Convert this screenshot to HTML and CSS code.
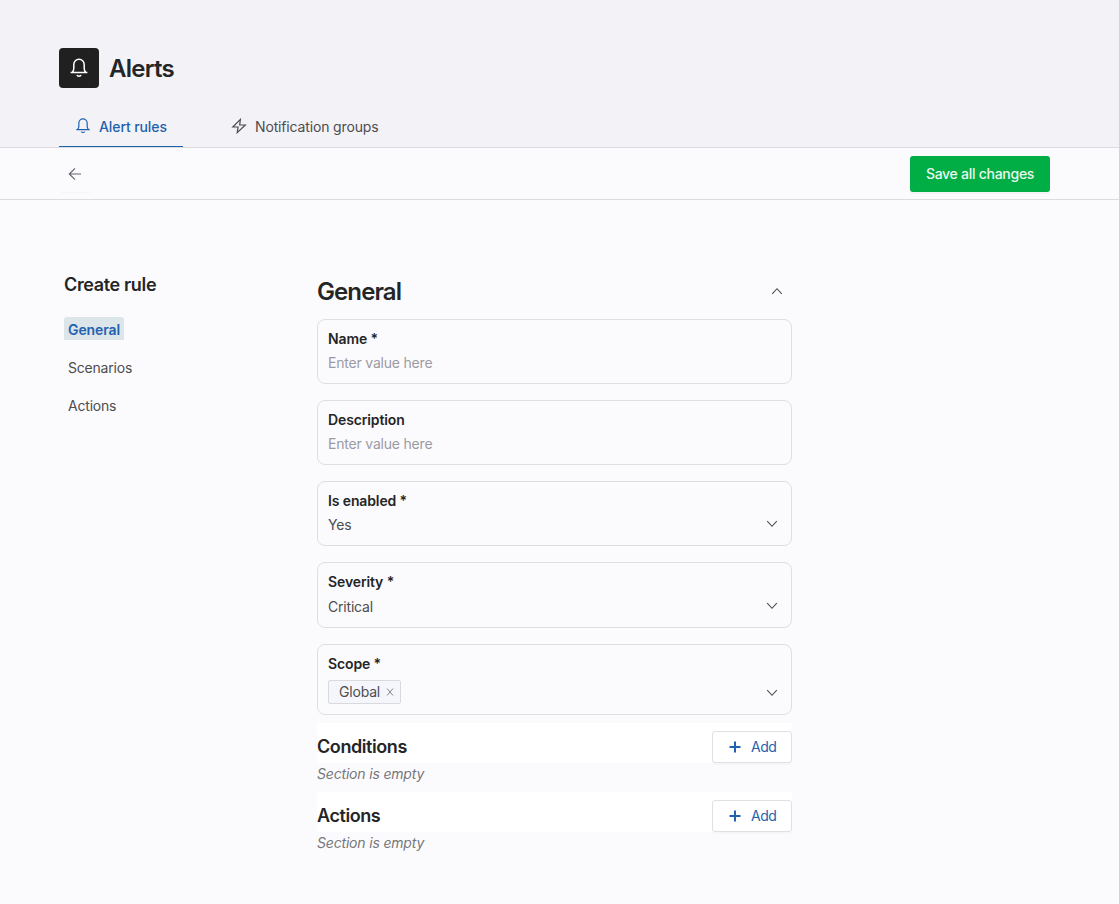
FILE: index.html
```html
<!DOCTYPE html>
<html lang="en">
<head>
<meta charset="utf-8">
<title>Alerts</title>
<link rel="stylesheet" href="styles.css">
</head>
<body>
<svg width="0" height="0" class="sprite" aria-hidden="true">
  <symbol id="bell" viewBox="0 0 20 20"><path d="M1.600 14.500h16.800M3.300 14.300c1.100-1.100 1.500-2.300 1.500-4V6.400a5.200 5.200 0 0 1 10.400 0v3.900c0 1.700.4 2.900 1.500 4M8 17c.4 1.500 3.600 1.500 4 0"/></symbol>
  <symbol id="down" viewBox="0 0 12 8"><path d="M1.200 1.200 6 6.300l4.800-5.100"/></symbol>
  <symbol id="plus" viewBox="0 0 12 12"><path d="M6 .5v11M.5 6h11"/></symbol>
</svg>
<header class="header">
  <div class="brand">
    <span class="logo"><svg class="logo-bell"><use href="#bell"/></svg></span>
    <h1 class="title">Alerts</h1>
  </div>
  <nav class="tabs">
    <a class="tab tab-active"><svg class="tab-icon"><use href="#bell"/></svg>Alert rules</a>
    <a class="tab"><svg class="tab-icon tab-bolt" viewBox="0 0 16 16"><path d="M9.400 1.400 1.800 9h5.300l-.9 5.600L14.300 7H8.700z"/></svg>Notification groups</a>
  </nav>
</header>
<div class="toolbar">
  <button class="back" aria-label="Back"><svg class="back-icon" viewBox="0 0 14 14"><path d="M13 7H1.500M7 1.300 1.300 7 7 12.700"/></svg></button>
  <button class="save">Save all changes</button>
</div>
<main class="main">
  <aside class="side">
    <h2 class="side-title">Create rule</h2>
    <a class="side-link side-active">General</a>
    <a class="side-link">Scenarios</a>
    <a class="side-link">Actions</a>
  </aside>
  <section class="form">
    <div class="form-head"><h2 class="form-title">General</h2><svg class="chevron chevron-up"><use href="#down"/></svg></div>
    <div class="field"><div class="label">Name *</div><div class="value placeholder">Enter value here</div></div>
    <div class="field"><div class="label">Description</div><div class="value placeholder">Enter value here</div></div>
    <div class="field"><div class="label">Is enabled *</div><div class="value">Yes<svg class="chevron"><use href="#down"/></svg></div></div>
    <div class="field field-severity"><div class="label">Severity *</div><div class="value">Critical<svg class="chevron"><use href="#down"/></svg></div></div>
    <div class="field field-scope"><div class="label">Scope *</div><div class="value"><span class="tag">Global<svg class="tag-x" viewBox="0 0 8 8"><path d="m1 .5 6 7m0-7-6 7"/></svg></span><svg class="chevron"><use href="#down"/></svg></div></div>
    <div class="section"><h3 class="section-title">Conditions</h3><button class="add"><svg class="plus"><use href="#plus"/></svg>Add</button></div>
    <p class="empty">Section is empty</p>
    <div class="section"><h3 class="section-title">Actions</h3><button class="add"><svg class="plus"><use href="#plus"/></svg>Add</button></div>
    <p class="empty">Section is empty</p>
  </section>
</main>
</body>
</html>
```
FILE: styles.css
```css
* { box-sizing: border-box; }
body { margin: 0; min-height: 904px; background: #fbfbfd; color: #4d4d4f; font: 14px/20px Inter, sans-serif; letter-spacing: -.2px; }
h1, h2, h3, p { margin: 0; }
button { font: inherit; letter-spacing: inherit; }
svg { display: block; flex: none; fill: none; stroke: currentColor; }
.sprite { position: absolute; }
.header { height: 148px; padding: 48px 59px 0; background: #f3f2f7; border-bottom: 1px solid #dcdce0; }
.brand { display: flex; align-items: center; gap: 10px; height: 40px; }
.logo { display: grid; place-items: center; width: 40px; height: 40px; border-radius: 4px; background: #202020; color: #fff; }
.logo-bell { width: 20px; height: 20px; stroke-width: 1.5; }
.title { font-size: 24px; line-height: 32px; font-weight: 600; color: #242526; padding-top: 2px; letter-spacing: -.75px; }
.tabs { display: flex; gap: 32px; height: 59px; padding-top: 18px; }
.tab { display: flex; align-items: center; gap: 8px; height: 41px; padding: 2px 16px 0; border-bottom: 1px solid transparent; letter-spacing: -.15px; white-space: nowrap; }
.tab-active { width: 124px; color: #1f62ad; font-weight: 500; border-color: #1f62ad; letter-spacing: -.1px; }
.tab-icon { width: 16px; height: 16px; stroke-width: 1.5; margin-bottom: 2px; }
.tab-bolt { stroke-width: 1.2; }
.toolbar { display: flex; align-items: center; justify-content: space-between; height: 52px; padding: 0 69px 0 59px; border-bottom: 1px solid #dcdce0; }
.back { display: grid; place-items: center; width: 32px; height: 36px; padding: 0; border: 0; border-radius: 4px; background: #fbfbfd; color: #66666c; box-shadow: 0 2px 0 rgba(0,0,0,.015); }
.back-icon { width: 14px; height: 14px; stroke-width: 1.2; }
.save { width: 140px; height: 36px; padding: 0; border: 0; border-radius: 3px; background: #00ae45; color: #e9f7ee; font-weight: 500; letter-spacing: -.27px; box-shadow: 0 2px 0 rgba(0,0,0,.03); }
.main { display: flex; padding: 72px 64px 0; }
.side { display: flex; flex-direction: column; align-items: flex-start; width: 253px; }
.side-title { font-size: 18px; line-height: 26px; font-weight: 600; color: #242526; margin-bottom: 19px; letter-spacing: -.35px; }
.side-link { height: 23px; padding: 3px 4px 0; margin-bottom: 15px; }
.side-active { background: #dce5ea; color: #1f62ad; font-weight: 600; border-radius: 3px 3px 0 0; letter-spacing: -.1px; }
.form { width: 475px; }
.form-head { display: flex; align-items: center; justify-content: space-between; height: 47px; padding: 0 9px 9px 0; }
.form-title { font-size: 24px; line-height: 32px; font-weight: 600; color: #242526; letter-spacing: -.9px; padding-top: 1px; }
.chevron { width: 12px; height: 8px; stroke-width: 1.1; margin-bottom: 2px; }
.chevron-up { transform: rotate(180deg); margin-bottom: 0; }
.field { height: 65px; margin-bottom: 16px; padding: 9px 13px 0 10px; border: 1px solid #dfdfe2; border-radius: 8px; }
.field-severity { height: 66px; }
.field-scope { height: 71px; margin-bottom: 8px; }
.label { font-weight: 600; color: #242526; letter-spacing: -.12px; }
.value { display: flex; align-items: center; justify-content: space-between; margin-top: 4px; }
.placeholder { color: #9b9aa3; }
.field-severity .value { margin-top: 5px; }
.field-scope .value { margin-top: 6px; }
.field-scope .chevron { margin: 2px 0 0; }
.tag { display: flex; align-items: center; gap: 6px; width: 73px; height: 24px; padding: 0 6px 0 10px; border: 1px solid #d9dadd; border-radius: 2px; background: #f5f6fb; }
.tag-x { width: 8px; height: 8px; color: #85858b; }
.section { display: flex; align-items: flex-end; justify-content: space-between; height: 40px; background: #fff; }
.section-title { font-size: 18px; line-height: 26px; font-weight: 600; color: #242526; margin-bottom: 3px; letter-spacing: -.42px; }
.add { display: flex; align-items: center; gap: 10px; width: 80px; height: 32px; padding: 0 0 0 16px; border: 1px solid #e0e0e2; border-radius: 3px; background: #fff; color: #1f62ad; letter-spacing: -.45px; box-shadow: 0 2px 0 rgba(0,0,0,.02); }
.plus { width: 12px; height: 12px; stroke-width: 2; }
.empty { height: 29px; padding-top: 1px; font-style: italic; color: #77777a; letter-spacing: -.18px; }
```
